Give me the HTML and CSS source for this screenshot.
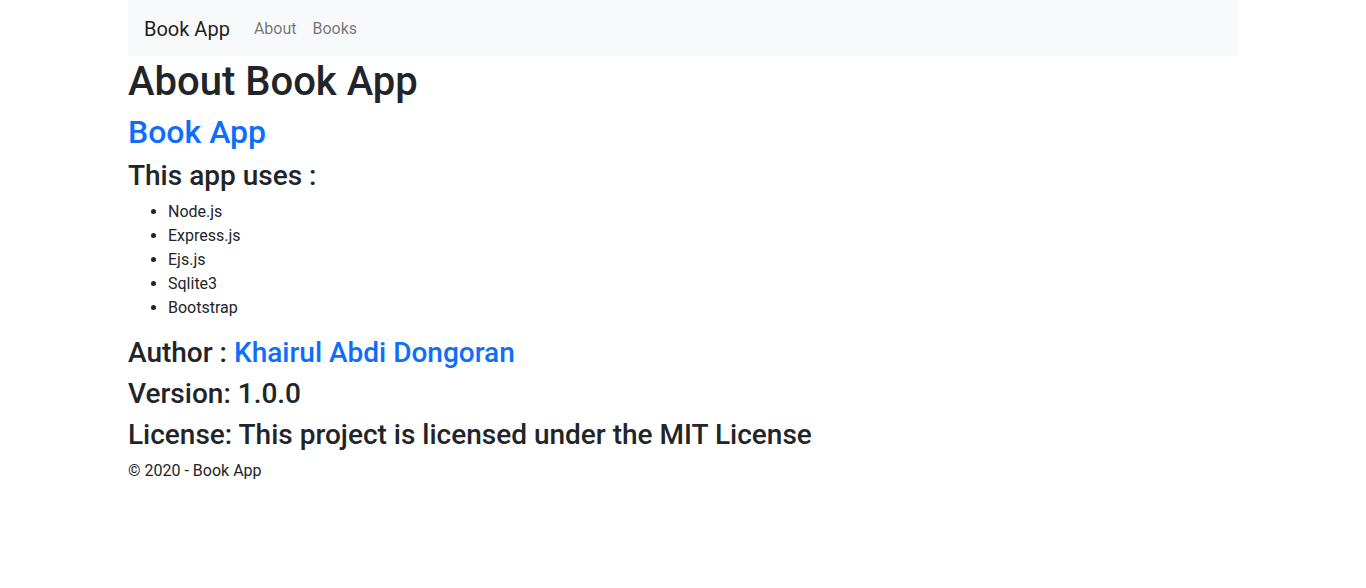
FILE: index.html
```html
<!DOCTYPE html>
<html lang="en">
<head>
<meta charset="utf-8">
<title>About Book App</title>
<link rel="stylesheet" href="styles.css">
</head>
<body>
<div class="container">
  <nav class="navbar">
    <a class="brand" href="#">Book App</a>
    <ul class="nav">
      <li><a class="nav-link" href="#">About</a></li>
      <li><a class="nav-link" href="#">Books</a></li>
    </ul>
  </nav>
  <main>
    <h1 class="title">About Book App</h1>
    <h2><a href="#">Book App</a></h2>
    <h3 class="tight">This app uses :</h3>
    <ul class="uses">
      <li>Node.js</li>
      <li>Express.js</li>
      <li>Ejs.js</li>
      <li>Sqlite3</li>
      <li>Bootstrap</li>
    </ul>
    <h3 class="tight">Author : <a href="#">Khairul Abdi Dongoran</a></h3>
    <h3>Version: 1.0.0</h3>
    <h3 class="tight">License: This project is licensed under the MIT License</h3>
  </main>
  <footer class="footer">&copy; 2020 - Book App</footer>
</div>
</body>
</html>
```

FILE: styles.css
```css
* { box-sizing: border-box; }
body {
  margin: 0;
  font-family: Roboto, "Liberation Sans", sans-serif;
  font-size: 16px;
  line-height: 1.5;
  color: #212529;
  background: #fff;
}
a { color: #0d6efd; text-decoration: none; }
.container {
  width: 1110px;
  margin: 0 auto;
}
.navbar {
  display: flex;
  align-items: center;
  background: #f8f9fa;
  padding: 9px 16px 7px;
}
.brand {
  color: rgba(0,0,0,.9);
  font-size: 20px;
  line-height: 30px;
  padding: 5px 0;
  margin-right: 16px;
}
.nav {
  display: flex;
  list-style: none;
  margin: 0;
  padding: 0;
}
.nav-link {
  display: block;
  padding: 8px;
  color: rgba(0,0,0,.55);
}
h1, h2, h3 {
  margin: 0 0 8px;
  font-weight: 500;
  line-height: 1.2;
}
h1 { font-size: 40px; }
h2 { font-size: 32px; }
h3 { font-size: 28px; }
.title { margin-top: 2px; margin-bottom: 7px; }
.tight { margin-bottom: 7px; }
.uses {
  margin: 0 0 16px;
  padding-left: 40px;
}
.footer {
  line-height: 24px;
}
```
